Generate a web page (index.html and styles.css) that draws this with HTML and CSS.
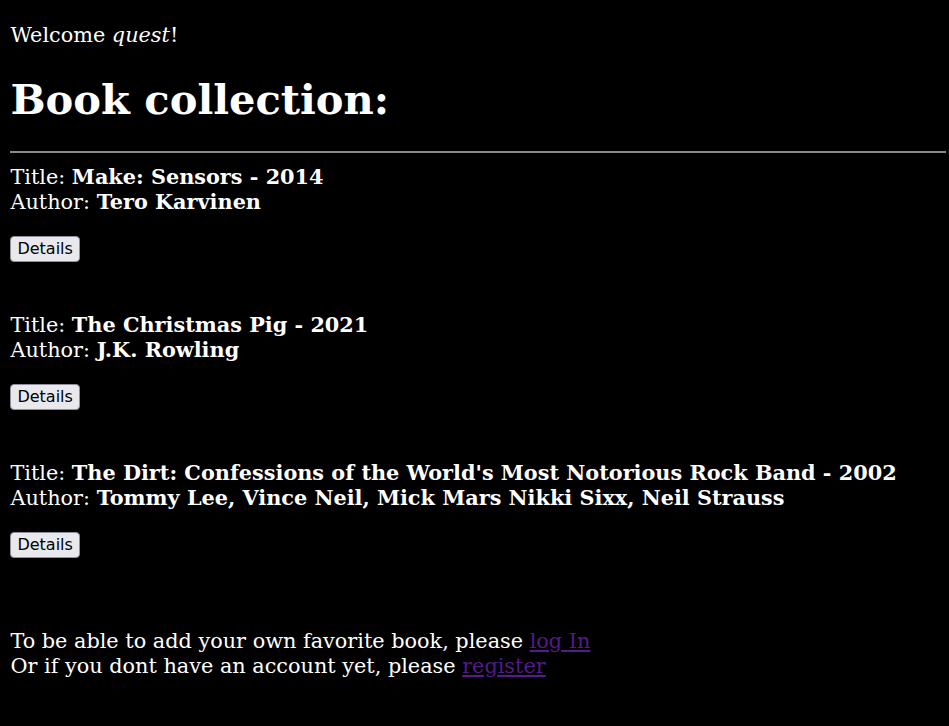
FILE: index.html
```html
<!DOCTYPE html>
<html>
<head>
<meta charset="utf-8">
<link rel="stylesheet" href="styles.css">
</head>
<body>
<p class="welcome">Welcome <i>quest</i>!</p>
<h1 class="heading">Book collection:</h1>
<hr class="rule">
<div class="book">
Title: <b class="val">Make: Sensors - 2014</b><br>
Author: <b class="val">Tero Karvinen</b>
<p class="actions"><button class="btn">Details</button></p>
</div>
<div class="book">
Title: <b class="val">The Christmas Pig - 2021</b><br>
Author: <b class="val">J.K. Rowling</b>
<p class="actions"><button class="btn">Details</button></p>
</div>
<div class="book">
Title: <b class="val">The Dirt: Confessions of the World's Most Notorious Rock Band - 2002</b><br>
Author: <b class="val">Tommy Lee, Vince Neil, Mick Mars Nikki Sixx, Neil Strauss</b>
<p class="actions"><button class="btn">Details</button></p>
</div>
<p class="foot">To be able to add your own favorite book, please <a class="link" href="#">log In</a><br>
Or if you dont have an account yet, please <a class="link" href="#">register</a></p>
</body>
</html>
```
FILE: styles.css
```css
html { background: #000; }
body {
  margin: 0 3px 10.4px 10.4px;
  color: #fff;
  font-family: "DejaVu Serif", serif;
  font-size: 20.8px;
  line-height: 25px;
}
.welcome { margin: 22.8px 0 20.8px; }
.heading {
  font-size: 41.6px;
  line-height: normal;
  margin: 26.9px 0 26.9px;
}
.rule {
  border: 0;
  border-top: 2px solid #8a8a8a;
  margin: 0 0 12.4px 0;
  height: 0;
}
.book { padding-bottom: 30.5px; }
.val { line-height: 20px; }
.actions { margin: 20.8px 0; line-height: 0; }
.btn {
  font-family: "DejaVu Sans", sans-serif;
  font-size: 16px;
  line-height: 19px;
  height: 26px;
  box-sizing: border-box;
  padding: 2px 6px;
  color: #000;
  background: #e9e9ed;
  border: 1px solid #8f8f9d;
  border-radius: 4px;
  vertical-align: top;
}
.foot { margin: 20px 0 20.8px; }
.link { color: #551a8b; }
```
